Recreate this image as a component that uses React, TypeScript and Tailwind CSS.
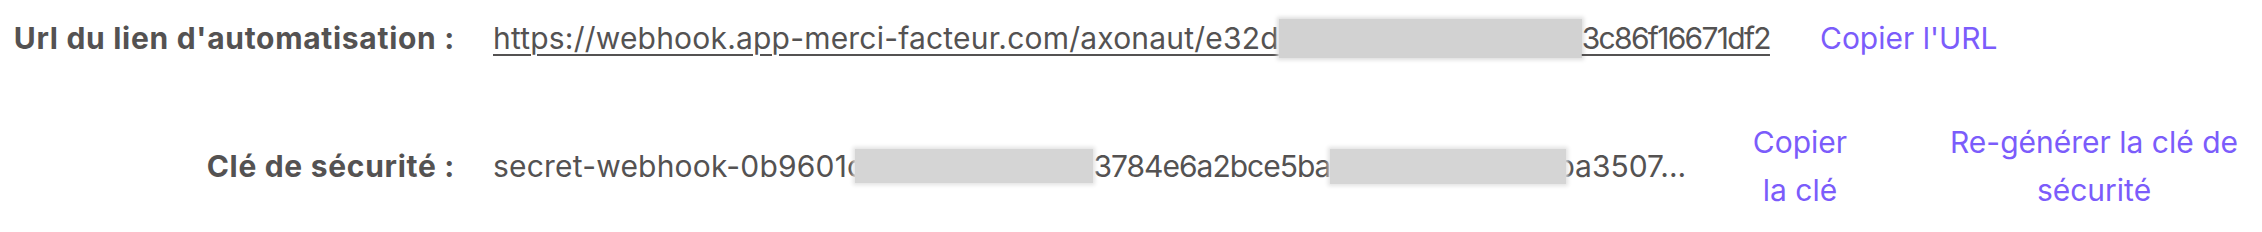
import React from "react";

export default function App() {
  return (
    <div
      className="w-[2262px] h-[232px] bg-white text-[#545252] text-[30px] leading-[48px] pt-[14px]"
      style={{ fontFamily: "Inter, 'Noto Sans', sans-serif" }}
    >
      <div className="flex items-center h-[48px]">
        <div className="w-[455px] text-right font-bold tracking-[0.7px] shrink-0">Url du lien d'automatisation :</div>
        <a className="ml-[38px] underline decoration-2 underline-offset-[5px] whitespace-nowrap flex items-center">
          <span className="tracking-[0.2px]">https://webhook.app-merci-facteur.com/axonaut/e32d</span>
          <span className="inline-block w-[303px] h-[39px] bg-[#d2d2d2] shadow-[0_0_4px_2px_#dedede]" />
          <span className="tracking-[-1.7px]">3c86f16671df2</span>
        </a>
        <button className="ml-[50px] text-[#7b5cfb] whitespace-nowrap">Copier l'URL</button>
      </div>
      <div className="flex items-center h-[96px] mt-[56px]">
        <div className="w-[455px] text-right font-bold tracking-[0.7px] shrink-0">Clé de sécurité :</div>
        <div className="ml-[38px] w-[1247px] shrink-0 whitespace-nowrap flex items-center">
          <span className="tracking-[0.2px]">secret-webhook-0b9601c</span>
          <span className="relative z-10 -ml-[9px] inline-block w-[238px] h-[34px] bg-[#d5d5d5] shadow-[0_0_4px_2px_#e2e2e2]" />
          <span className="tracking-[-1px]">3784e6a2bce5ba</span>
          <span className="relative z-10 -mr-[10px] inline-block w-[236px] h-[35px] bg-[#d5d5d5] shadow-[0_0_4px_2px_#e2e2e2]" />
          <span>ba3507...</span>
        </div>
        <button className="w-[120px] shrink-0 text-center text-[#7b5cfb]">Copier la clé</button>
        <button className="ml-[89px] w-[290px] shrink-0 text-center text-[#7b5cfb]">Re-générer la clé de sécurité</button>
      </div>
    </div>
  );
}
